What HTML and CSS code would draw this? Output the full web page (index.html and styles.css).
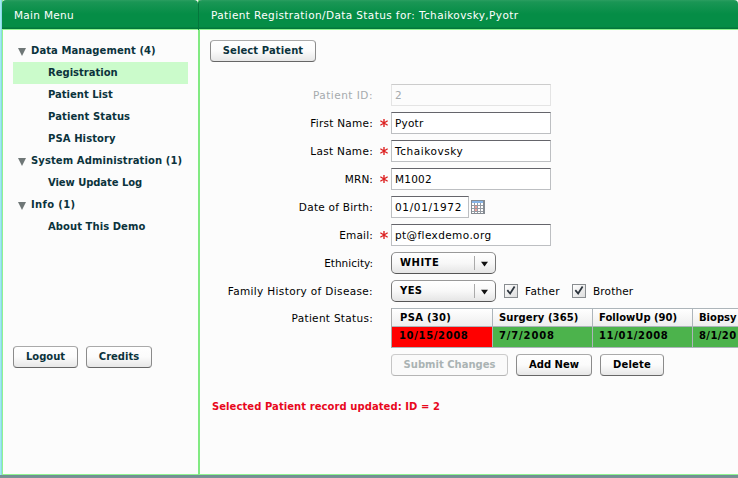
FILE: index.html
```html
<!DOCTYPE html>
<html lang="en">
<head>
<meta charset="utf-8">
<title>Patient Registration</title>
<link rel="stylesheet" href="styles.css">
</head>
<body>
<svg class="defs" width="0" height="0">
  <symbol id="req" viewBox="0 0 7 7"><path d="M3.5 0v7M.3 1.5l6.4 4M.3 5.500l6.4-4" stroke="#dc2020" stroke-width="1.2" fill="none"/></symbol>
  <symbol id="tri" viewBox="0 0 8 8"><path d="M0 0h8L4 8z" fill="#6f7777"/></symbol>
  <symbol id="drop" viewBox="0 0 8 6"><path d="M0 .3h8L4 5.8z" fill="#111"/></symbol>
  <symbol id="tick" viewBox="0 0 14 14"><path d="M2.700 6l3.300 4L11.2 1.700" stroke="#2b333c" stroke-width="2" fill="none"/></symbol>
</svg>
<div class="app">
  <aside class="panel menu">
    <header class="bar"><span class="t-menu">Main Menu</span></header>
    <nav class="tree">
      <div class="node"><svg><use href="#tri"/></svg><span class="t-dm">Data Management (4)</span></div>
      <div class="leaf selected"><span class="t-reg">Registration</span></div>
      <div class="leaf"><span class="t-list">Patient List</span></div>
      <div class="leaf"><span class="t-stat">Patient Status</span></div>
      <div class="leaf"><span class="t-psa">PSA History</span></div>
      <div class="node"><svg><use href="#tri"/></svg><span class="t-sys">System Administration (1)</span></div>
      <div class="leaf"><span class="t-log">View Update Log</span></div>
      <div class="node"><svg><use href="#tri"/></svg><span class="t-info">Info (1)</span></div>
      <div class="leaf"><span class="t-about">About This Demo</span></div>
    </nav>
    <div class="menu-actions">
      <button class="btn w-logout"><span>Logout</span></button>
      <button class="btn w-credits"><span>Credits</span></button>
    </div>
  </aside>
  <main class="panel detail">
    <header class="bar"><span class="t-title">Patient Registration/Data Status for: Tchaikovsky,Pyotr</span></header>
    <button class="btn w-select"><span class="t-select">Select Patient</span></button>
    <section class="form">
      <div class="row disabled"><label><span class="l-id">Patient ID:</span></label><div class="field"><span>2</span></div></div>
      <div class="row"><label><span class="l-first">First Name:</span></label><svg class="req"><use href="#req"/></svg><div class="field"><span class="v-first">Pyotr</span></div></div>
      <div class="row"><label><span class="l-last">Last Name:</span></label><svg class="req"><use href="#req"/></svg><div class="field"><span class="v-last">Tchaikovsky</span></div></div>
      <div class="row"><label><span class="l-mrn">MRN:</span></label><svg class="req"><use href="#req"/></svg><div class="field"><span class="v-mrn">M1002</span></div></div>
      <div class="row"><label><span class="l-dob">Date of Birth:</span></label><div class="field date"><span class="v-dob">01/01/1972</span></div>
        <svg class="cal" viewBox="0 0 14 14" shape-rendering="crispEdges">
          <path d="M0 0h14v14H0z" fill="#858b92"/><path d="M1 1h11v2H1z" fill="#86b4e6"/><path d="M1 3h11v10H1z" fill="#fff"/>
          <path d="M1 5.500h11M1 8.500h11M1 11.500h11M3.500 3v10M6.500 3v10M9.500 3v10" stroke="#959ba3" fill="none"/><path d="M4 6h2v2H4zM4 9h2v2H4z" fill="#f2a09a"/>
        </svg></div>
      <div class="row"><label><span class="l-email">Email:</span></label><svg class="req"><use href="#req"/></svg><div class="field"><span class="v-email">pt@flexdemo.org</span></div></div>
      <div class="row"><label><span class="l-eth">Ethnicity:</span></label><div class="select"><span class="v-white">WHITE</span><svg><use href="#drop"/></svg></div></div>
      <div class="row"><label><span class="l-fam">Family History of Disease:</span></label><div class="select"><span class="v-yes">YES</span><svg><use href="#drop"/></svg></div>
        <div class="check father"><svg><use href="#tick"/></svg><span class="v-father">Father</span></div>
        <div class="check"><svg><use href="#tick"/></svg><span class="v-brother">Brother</span></div></div>
      <div class="row grid-row"><label><span class="l-status">Patient Status:</span></label>
        <div class="grid">
          <div class="th"><span class="g-psa">PSA (30)</span></div><div class="th"><span class="g-sur">Surgery (365)</span></div><div class="th"><span class="g-fol">FollowUp (90)</span></div><div class="th"><span class="g-bio">Biopsy</span></div>
          <div class="td late"><span class="g-date">10/15/2008</span></div><div class="td"><span class="g-short">7/7/2008</span></div><div class="td"><span class="g-date">11/01/2008</span></div><div class="td"><span class="g-last">8/1/20</span></div>
        </div></div>
      <div class="actions">
        <button class="btn w-submit" disabled><span>Submit Changes</span></button>
        <button class="btn dark w-add"><span>Add New</span></button>
        <button class="btn dark w-delete"><span class="t-delete">Delete</span></button>
      </div>
    </section>
    <p class="message"><span class="t-msg">Selected Patient record updated: ID = 2</span></p>
  </main>
</div>
</body>
</html>
```

FILE: styles.css
```css
* { box-sizing: border-box; }
body { margin: 0; width: 738px; height: 478px; overflow: hidden; background: linear-gradient(#6d8f92 475px, #7b9295 478px); font: 10.5px/14px "DejaVu Sans", sans-serif; color: #000; }
.defs { position: absolute; }
span { white-space: nowrap; }
.app { display: grid; grid-template-columns: 196px 540px; height: 475px; padding-left: 2px; background: linear-gradient(90deg, #9eeef2 1px, #8fd6e6 1px, #8fd6e6 2px, transparent 2px); }
.panel { background: #fcfcfc; border: solid #90f590; border-width: 0 0 1px 1px; height: 475px; }
.detail { border-left: 2px solid #90f590; border-left-color: #82ea82; }
.bar { height: 30px; padding: 8px 0 0 12px; color: #fff; background: linear-gradient(#2b9e60 0, #1a9655 2px, #058d46 14px, #058d46 27px, #04763c 28px, #04763c 29px, #90f590 29px); border-radius: 4px 4px 0 0; margin: 0 0 0 -1px; }
.detail .bar { margin-left: -2px; border-left: 1px solid #04763c; }
.tree { padding: 10px 10px 0; font-weight: bold; font-size: 10px; color: #0b333c; }
.node, .leaf { height: 22px; display: flex; align-items: center; padding-bottom: 1px; }
.node svg { width: 8px; height: 8px; margin: 3px 5px 0; flex: none; }
.leaf { padding-left: 35px; }
.selected { background: #cbfbcb; }
.menu-actions { display: flex; gap: 8px; margin: 108px 0 0 10px; }
.btn { height: 22px; padding: 0 0 1px; border: 1px solid #888; border-color: #aaa #8b8b8b #666; border-radius: 4px; background: linear-gradient(#fff, #fbfbfb 50%, #e7e7e7); font: bold 10px/14px "DejaVu Sans", sans-serif; color: #0b333c; display: flex; align-items: center; justify-content: center; flex: none; }
.btn:disabled { color: #aab3b3; border-color: #ccc #c5c5c5 #b5b5b5; background: #fafafa; }
.btn.dark { color: #000; }
.w-logout { width: 65px; } .w-credits { width: 66px; } .w-select { width: 106px; margin: 10px 0 0 10px; }
.w-submit { width: 117px; } .w-add { width: 76px; } .w-delete { width: 64px; }
.form { margin-top: 22px; display: grid; gap: 6px; }
.row { display: flex; height: 22px; position: relative; }
.row label { width: 173px; margin-right: 18px; padding-top: 4px; text-align: right; flex: none; }
.req { position: absolute; left: 180px; top: 7px; width: 8px; height: 8px; }
.field { width: 160px; border: 1px solid #bdbfc2; border-top-color: #65656b; padding: 3px 0 0 3px; background: #fff; }
.disabled { color: #a5aaad; }
.disabled .field { border-color: #ccc #e4e4e4 #e4e4e4; background: #fcfcfc; }
.date { width: 78px; }
.cal { width: 14px; height: 14px; margin: 4px 0 0 2px; }
.select { width: 105px; border: 1px solid #888; border-color: #999 #777 #555; border-radius: 5px; background: linear-gradient(#fff, #f8f8f8 50%, #e5e5e5); font-weight: bold; font-size: 10px; display: flex; align-items: center; padding: 0 7px 1px 8px; }
.select svg { width: 15px; height: 14px; padding: 5px 1px 3px 6px; margin: 1px -1px 0 auto; border-left: 1px solid #aaa; }
.check { display: flex; margin: 4px 0 0 8px; }
.check svg { width: 14px; height: 14px; border: 1px solid #898d90; background: linear-gradient(135deg, #fff, #ddd); margin-right: 7px; overflow: visible; }
.father { width: 60px; }
.grid-row { height: 40px; }
.grid-row label { padding-top: 3px; }
.grid { display: grid; grid-template-columns: 101px 100px 100px 45px; grid-template-rows: 19px 21px; width: 347px; flex: none; border-left: 1px solid #aaa; font-weight: bold; font-size: 10px; }
.th { border: solid #adb5ba; border-width: 1px 1px 1px 0; padding: 2px 0 0 8px; background: linear-gradient(#fff, #eee); }
.td { border: solid #adb5ba; border-width: 0 1px 1px 0; padding: 2px 0 0 6px; background: #4cb34c; }
.th:nth-child(n+2) { padding-left: 6px; }
.td.late { background: #f00; padding-left: 7px; }
.th:nth-child(4), .td:nth-child(8) { border-right: 0; }
.actions { display: flex; gap: 8px; margin-left: 191px; }
.message { margin: 24px 0 0 12px; color: #e8081c; font-weight: bold; font-size: 10px; }

/* tracking */
.t-menu { letter-spacing: .3px; }
.t-title { letter-spacing: .39px; }
.t-dm { letter-spacing: .08px; }
.t-stat, .t-psa, .t-sys, .t-select, .g-sur { letter-spacing: .1px; }
.t-log { letter-spacing: -.07px; }
.t-info { letter-spacing: .35px; }
.t-about, .t-msg { letter-spacing: .07px; }
.t-delete, .v-brother { letter-spacing: .15px; }
.l-id { letter-spacing: .5px; }
.l-first, .l-dob { letter-spacing: .25px; }
.l-last, .l-status, .v-father, .g-psa { letter-spacing: .3px; }
.l-mrn { letter-spacing: .1px; }
.l-email, .v-first, .v-mrn { letter-spacing: .2px; }
.l-fam { letter-spacing: .35px; }
.v-last { letter-spacing: .55px; }
.v-dob, .g-date { letter-spacing: .65px; }
.v-email, .v-yes { letter-spacing: .4px; }
.v-white { letter-spacing: .5px; }
.g-short { letter-spacing: .85px; }
.g-last { letter-spacing: .4px; }
```
